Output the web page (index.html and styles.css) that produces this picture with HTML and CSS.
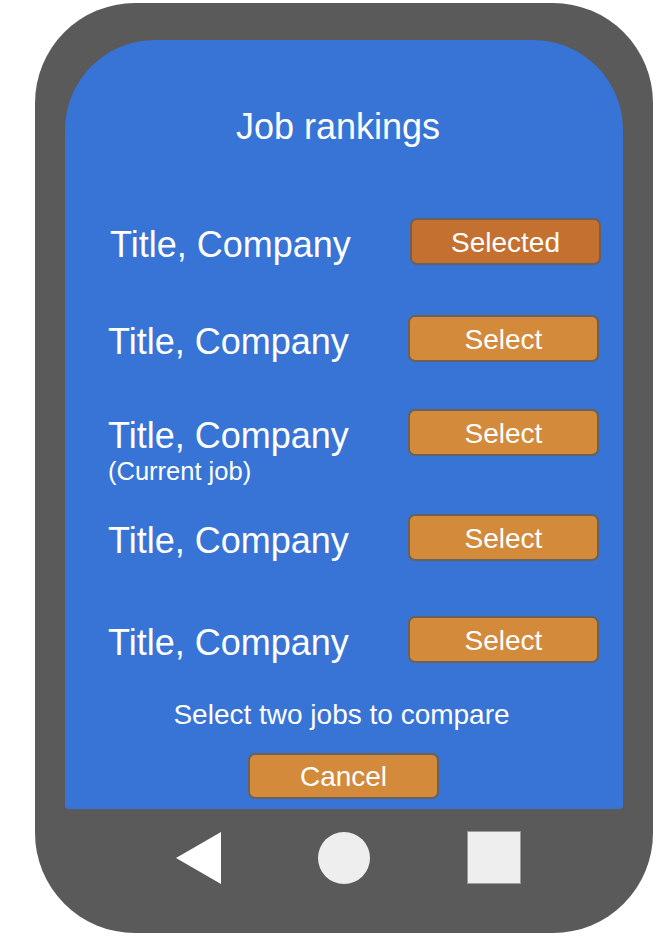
FILE: index.html
```html
<!DOCTYPE html>
<html lang="en">
<head>
<meta charset="utf-8">
<title>Job rankings</title>
<link rel="stylesheet" href="styles.css">
</head>
<body>
<div class="phone">
  <div class="screen">
    <h1 class="title">Job rankings</h1>
    <div class="rows">
      <div class="row is-selected">
        <div class="job"><div class="job-name">Title, Company</div></div>
        <button class="btn btn-selected">Selected</button>
      </div>
      <div class="row">
        <div class="job"><div class="job-name">Title, Company</div></div>
        <button class="btn">Select</button>
      </div>
      <div class="row">
        <div class="job"><div class="job-name">Title, Company</div><div class="job-note">(Current job)</div></div>
        <button class="btn">Select</button>
      </div>
      <div class="row">
        <div class="job"><div class="job-name">Title, Company</div></div>
        <button class="btn">Select</button>
      </div>
      <div class="row">
        <div class="job"><div class="job-name">Title, Company</div></div>
        <button class="btn">Select</button>
      </div>
    </div>
    <p class="hint">Select two jobs to compare</p>
    <div class="actions"><button class="btn btn-cancel">Cancel</button></div>
  </div>
  <nav class="navbar">
    <svg class="nav-back" width="45" height="52" viewBox="0 0 45 52"><polygon points="0,26 45,0 45,52" fill="#ffffff"/></svg>
    <span class="nav-home"></span>
    <span class="nav-recent"></span>
  </nav>
</div>
</body>
</html>
```

FILE: styles.css
```css
* { box-sizing: border-box; }
html, body { margin: 0; padding: 0; background: #ffffff; }
body {
  font-family: "Liberation Sans", Arial, sans-serif;
  color: #ffffff;
  width: 668px;
  height: 950px;
  overflow: hidden;
}
.phone {
  margin: 3px 0 0 35px;
  width: 618px;
  height: 930px;
  background: #5a5a5a;
  border-radius: 100px;
  padding: 37px 30px 0 30px;
  display: flex;
  flex-direction: column;
}
.screen {
  width: 558px;
  height: 769px;
  background: #3774d6;
  border-radius: 90px 90px 4px 4px;
  padding-top: 68.5px;
  display: flex;
  flex-direction: column;
}
.title {
  margin: 0;
  font-weight: normal;
  font-size: 36px;
  line-height: 36px;
  text-align: center;
  padding-right: 12px;
}
.rows {
  margin-top: 73.5px;
  display: flex;
  flex-direction: column;
  padding-left: 43px;
}
.row {
  display: grid;
  grid-template-columns: 300px 191px;
  align-items: start;
}
.row:nth-child(2) { margin-top: 50px; }
.row:nth-child(3) { margin-top: 47px; }
.row:nth-child(4) { margin-top: 31px; }
.row:nth-child(5) { margin-top: 55px; }
.row.is-selected { padding-left: 2px; }
.job-name {
  font-size: 36px;
  line-height: 47px;
  padding-top: 3px;
  height: 47px;
  white-space: nowrap;
}
.job-note {
  margin-top: 3px;
  font-size: 25.5px;
  line-height: 24px;
  white-space: nowrap;
}
.btn {
  width: 191px;
  height: 47px;
  border: 2px solid #6b6158;
  border-radius: 7px;
  background: #d38b3b;
  color: #ffffff;
  font-family: "Liberation Sans", Arial, sans-serif;
  font-size: 28px;
  line-height: 1;
  padding: 3px 0 0 0;
  display: flex;
  align-items: center;
  justify-content: center;
}
.btn-selected { background: #c47030; }
.hint {
  margin: 38px 0 0 0;
  font-size: 28px;
  line-height: 28px;
  text-align: center;
  padding-right: 5px;
}
.actions {
  margin-top: 23.5px;
  display: flex;
  padding-left: 183px;
}
.btn-cancel { height: 46px; }
.navbar {
  margin-top: 22px;
  display: flex;
  align-items: center;
  gap: 97px;
  padding-left: 111px;
}
.nav-back { display: block; }
.nav-home {
  width: 52px;
  height: 52px;
  border-radius: 50%;
  background: #eeeeee;
}
.nav-recent {
  width: 54px;
  height: 53px;
  background: #eeeeee;
  border: 1px solid #9a9a9a;
}
```
